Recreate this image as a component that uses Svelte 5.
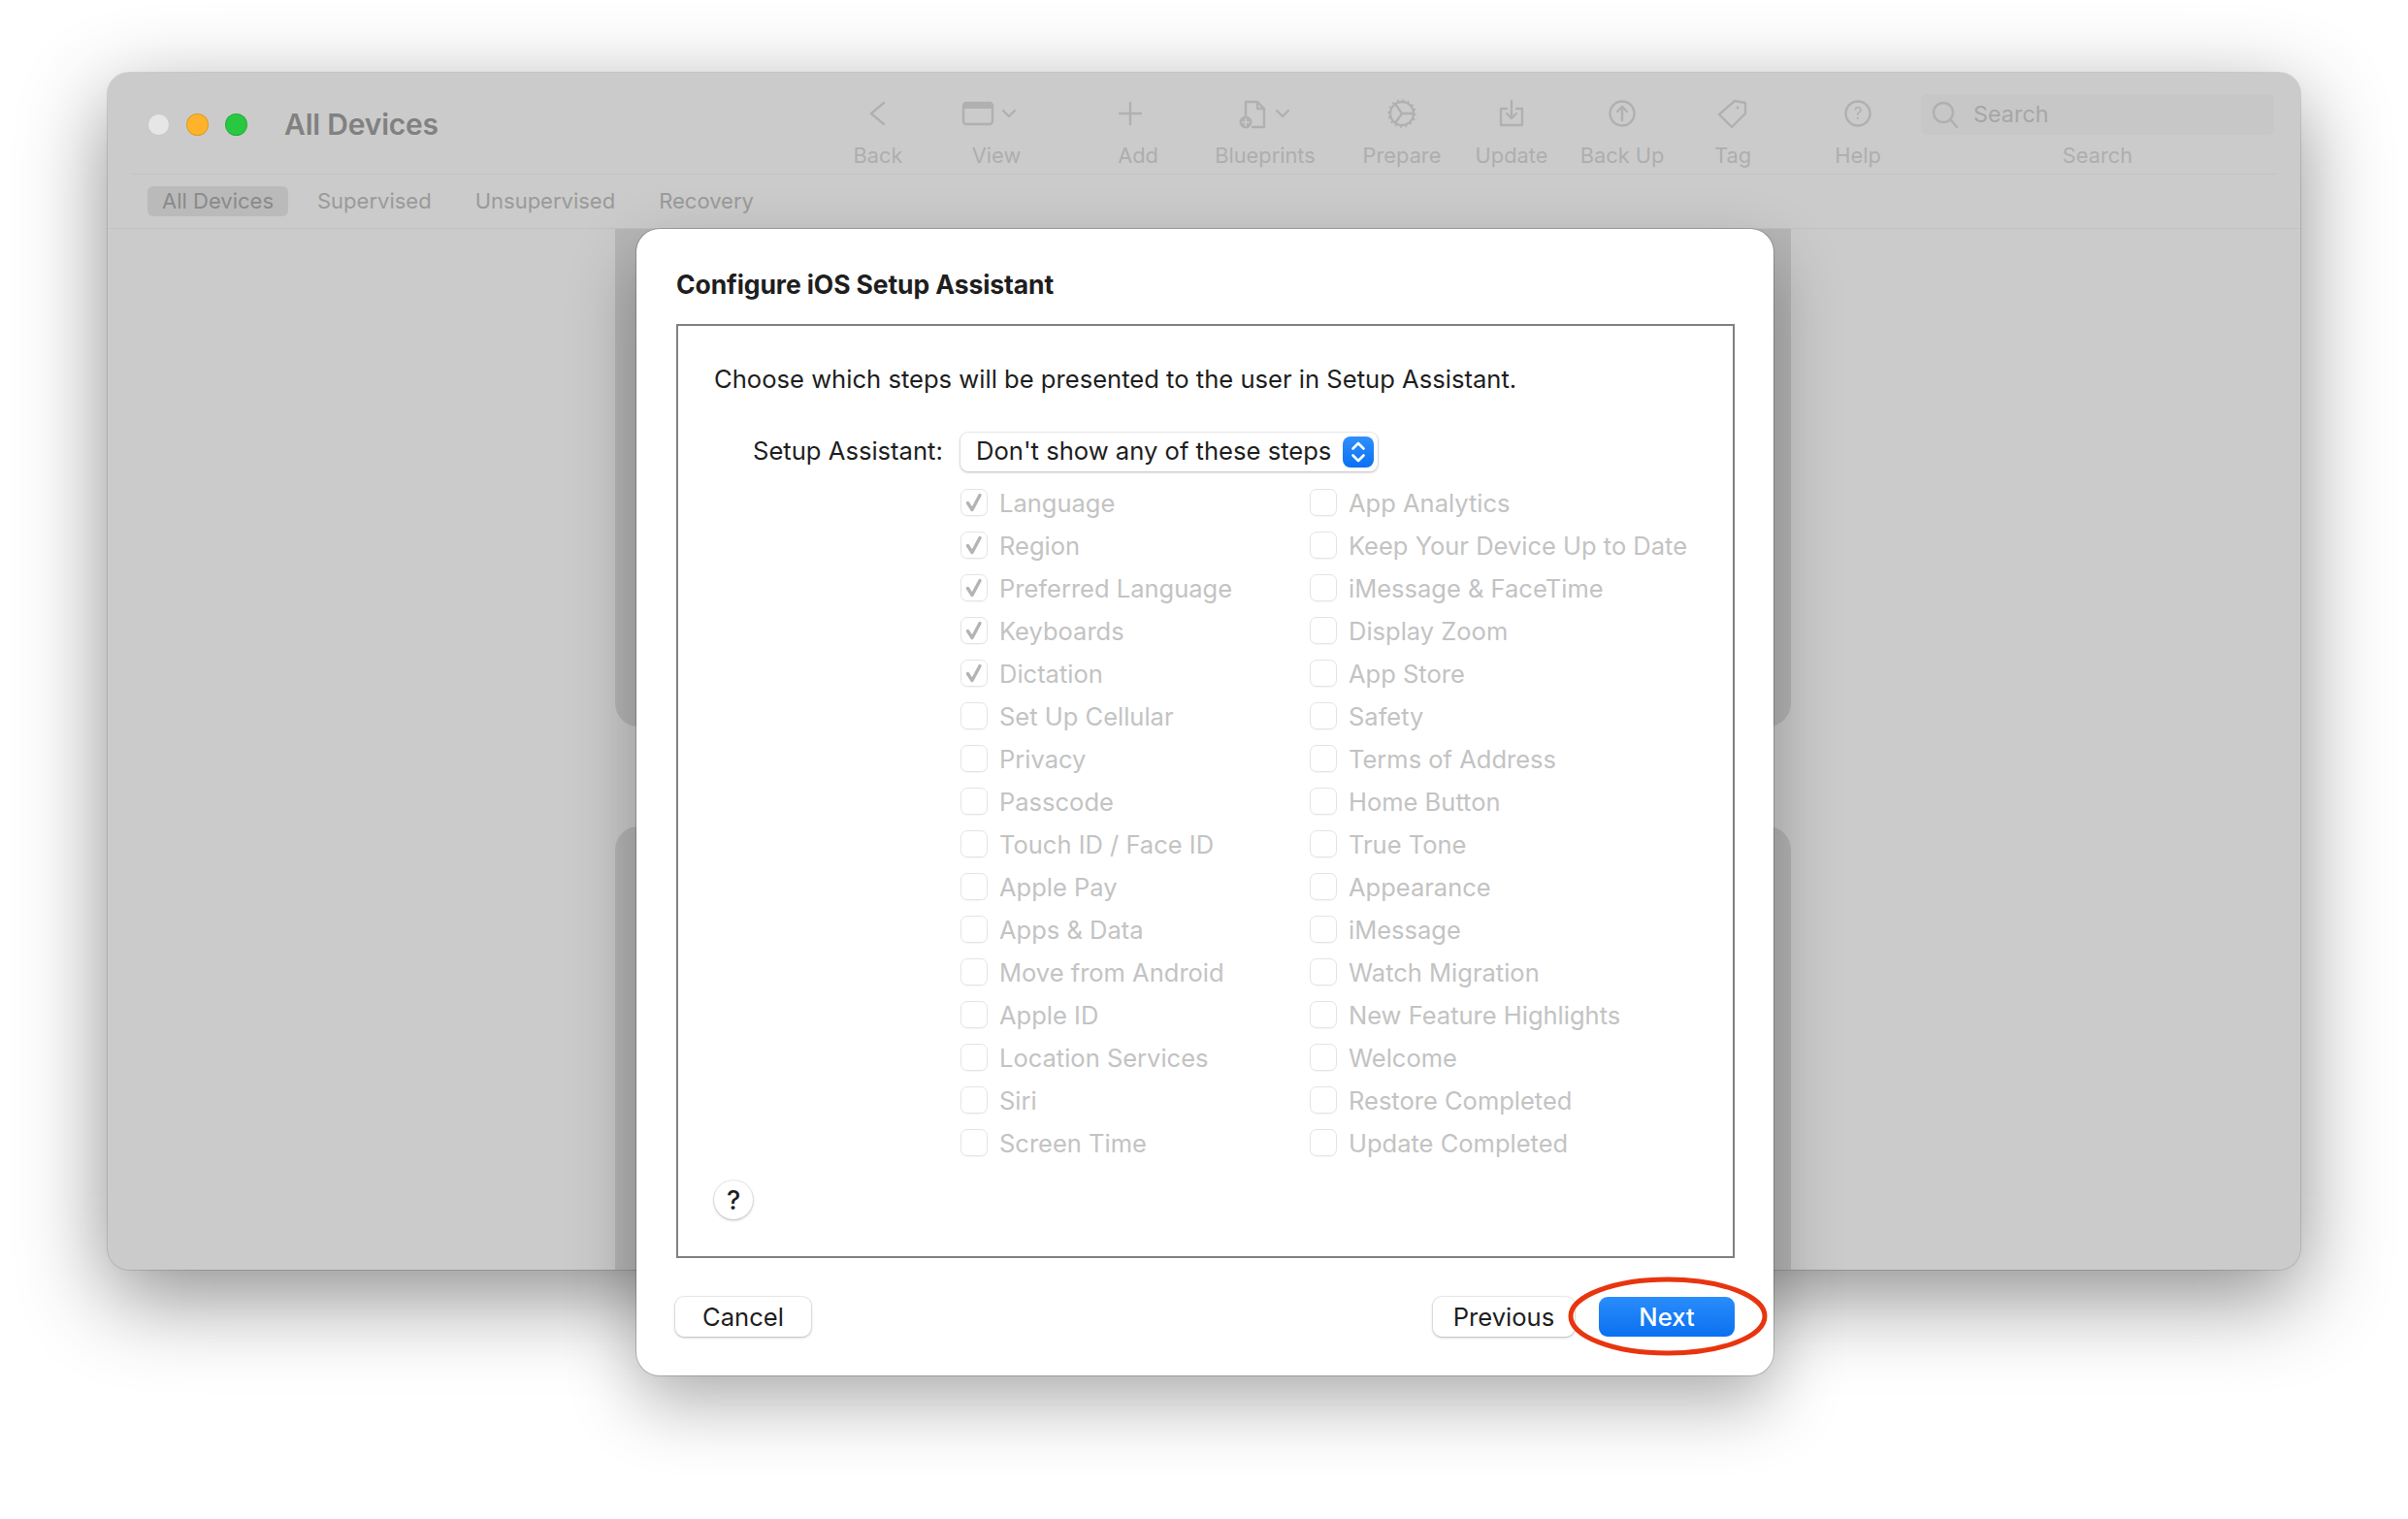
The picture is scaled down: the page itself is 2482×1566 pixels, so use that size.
<script lang="ts">
  const leftSteps = [
    'Language', 'Region', 'Preferred Language', 'Keyboards', 'Dictation', 'Set Up Cellular',
    'Privacy', 'Passcode', 'Touch ID / Face ID', 'Apple Pay', 'Apps & Data', 'Move from Android',
    'Apple ID', 'Location Services', 'Siri', 'Screen Time'
  ];
  const rightSteps = [
    'App Analytics', 'Keep Your Device Up to Date', 'iMessage & FaceTime', 'Display Zoom', 'App Store',
    'Safety', 'Terms of Address', 'Home Button', 'True Tone', 'Appearance', 'iMessage', 'Watch Migration',
    'New Feature Highlights', 'Welcome', 'Restore Completed', 'Update Completed'
  ];
  // rows run across, so zip the two columns; the first five on the left are ticked
  const steps = leftSteps.flatMap((name, i) => [
    { name, checked: i < 5 },
    { name: rightSteps[i], checked: false }
  ]);
  const tabs = ['All Devices', 'Supervised', 'Unsupervised', 'Recovery'];
</script>

<div class="stage">
  <div class="window">
    <div class="window-clip">
      <header class="titlebar">
        <div class="lights">
          <span class="light close"></span>
          <span class="light min"></span>
          <span class="light max"></span>
        </div>
        <h1 class="window-title">All Devices</h1>
        <div class="toolbar">
          <div class="tool">
            <svg width="60" height="34" viewBox="0 0 60 34"><path d="M36 6 23 17l13 11"/></svg>
            <span>Back</span>
          </div>
          <div class="tool">
            <svg class="shift-view" width="60" height="34" viewBox="0 0 60 34">
              <rect x="3" y="6" width="30" height="22" rx="3"/>
              <path class="band" d="M4 7h28v5H4z"/>
              <path d="M44 14l6 6 6-6"/>
            </svg>
            <span>View</span>
          </div>
          <div class="tool">
            <svg class="shift-add" width="60" height="34" viewBox="0 0 60 34"><path d="M30 6v22M19 17h22"/></svg>
            <span>Add</span>
          </div>
          <div class="tool">
            <svg width="60" height="34" viewBox="0 0 60 34">
              <path d="M10 19V5h12l7 7v19h-12M22 5v7h7"/>
              <circle class="solid" cx="10" cy="26" r="6.5"/>
              <path class="cut" d="M10 22.5v7M6.5 26h7"/>
              <path d="M42 14l6 6 6-6"/>
            </svg>
            <span>Blueprints</span>
          </div>
          <div class="tool">
            <svg width="60" height="34" viewBox="0 0 60 34">
              <circle cx="30" cy="17" r="12"/>
              <circle class="teeth" cx="30" cy="17" r="13.5"/>
              <path d="M23 7l7 10-7 10M30 17h12"/>
            </svg>
            <span>Prepare</span>
          </div>
          <div class="tool">
            <svg width="60" height="34" viewBox="0 0 60 34">
              <path d="M25 12h-6v17h22V12h-6M30 4v18M25 17l5 5 5-5"/>
            </svg>
            <span>Update</span>
          </div>
          <div class="tool">
            <svg width="60" height="34" viewBox="0 0 60 34">
              <circle cx="30" cy="17" r="12.5"/>
              <path d="M30 24V10M25 15l5-5 5 5"/>
            </svg>
            <span>Back Up</span>
          </div>
          <div class="tool">
            <svg width="60" height="34" viewBox="0 0 60 34">
              <path d="M16 18 32 4l11 2v11L29 31z"/>
              <circle class="solid" cx="35" cy="11" r="1.4"/>
            </svg>
            <span>Tag</span>
          </div>
          <div class="tool">
            <svg width="60" height="34" viewBox="0 0 60 34">
              <circle cx="30" cy="17" r="12.5"/>
              <text x="30" y="23" text-anchor="middle">?</text>
            </svg>
            <span>Help</span>
          </div>
          <div class="search-tool">
            <div class="search-field">
              <svg width="28" height="30" viewBox="0 0 28 30"><circle cx="12" cy="13" r="10"/><path d="M19.5 20.5 26 28"/></svg>
              <span>Search</span>
            </div>
            <span class="search-label">Search</span>
          </div>
        </div>
      </header>
      <nav class="tabs">
        {#each tabs as tab, i}
          <span class="tab" class:active={i === 0}>{tab}</span>
        {/each}
      </nav>
    </div>
  </div>

  <div class="back-sheet upper"></div>
  <div class="back-sheet lower"></div>

  <section class="dialog">
    <h2>Configure iOS Setup Assistant</h2>
    <div class="box">
      <p class="intro">Choose which steps will be presented to the user in Setup Assistant.</p>
      <div class="select-row">
        <span class="select-label">Setup Assistant:</span>
        <div class="select">
          <span class="select-value">Don't show any of these steps</span>
          <span class="stepper">
            <svg width="32" height="32" viewBox="0 0 32 32"><path d="M10.5 12.5 16 7l5.500 5.500M10.500 19.500 16 25l5.500-5.500"/></svg>
          </span>
        </div>
      </div>
      <div class="steps">
        {#each steps as step}
          <label class="step">
            <span class="check">
              {#if step.checked}
                <svg width="28" height="28" viewBox="0 0 28 28"><path d="M7.500 14.500 12 21.500 20 6.500"/></svg>
              {/if}
            </span>
            {step.name}
          </label>
        {/each}
      </div>
      <button class="help">?</button>
    </div>
    <footer class="actions">
      <button class="btn cancel">Cancel</button>
      <button class="btn previous">Previous</button>
      <button class="btn next">Next</button>
      <svg class="circle-mark" width="210" height="86" viewBox="0 0 210 86"><ellipse cx="105" cy="43" rx="100" ry="38"/></svg>
    </footer>
  </section>
</div>

<style>
  :global(body) {
    margin: 0;
    background: #fff;
  }

  .stage {
    position: relative;
    width: 2482px;
    height: 1566px;
    box-sizing: border-box;
    padding: 75px 111px 0;
    overflow: hidden;
    font-family: Inter, "Liberation Sans", sans-serif;
  }

  .window {
    height: 1234px;
    border-radius: 22px;
    background: #cbcbcb;
    box-shadow: 0 0 0 1px rgba(0, 0, 0, 0.12), 0 28px 90px rgba(0, 0, 0, 0.45);
  }

  .window-clip {
    height: 100%;
    border-radius: 22px;
    overflow: hidden;
  }

  .titlebar {
    display: flex;
    align-items: flex-start;
    height: 105px;
    box-sizing: border-box;
    margin: 0 24px;
    padding-left: 17px;
    border-bottom: 1px solid #c4c4c4;
  }

  .lights {
    display: flex;
    gap: 17px;
    margin-top: 42px;
  }

  .light {
    width: 23px;
    height: 23px;
    border-radius: 50%;
    box-sizing: border-box;
    border: 1px solid rgba(0, 0, 0, 0.12);
  }

  .light.close { background: #e6e6e6; }
  .light.min { background: #feb32b; }
  .light.max { background: #28c940; }

  .window-title {
    margin: 34px 0 0 38px;
    font-size: 30px;
    line-height: 38px;
    font-weight: 600;
    color: #818181;
    letter-spacing: -0.2px;
  }

  /* each column is the distance between two tool centres: a tool has no width of
     its own and its icon and label centre on the column's left edge */
  .toolbar {
    display: grid;
    grid-template-columns: 122px 146px 131px 141px 113px 114px 114px 129px 65px 364px;
    margin-left: auto;
    margin-right: 3px;
    padding-top: 25px;
  }

  .tool {
    display: flex;
    flex-direction: column;
    align-items: center;
    width: 0;
    white-space: nowrap;
    font-size: 21.800px;
    line-height: 28px;
    color: #aeaeae;
  }

  .tool > span {
    margin-top: 12px;
  }

  .toolbar svg {
    fill: none;
    stroke: #b0b0b0;
    stroke-width: 2.4;
    stroke-linejoin: round;
    stroke-linecap: round;
    flex: none;
  }

  .tool svg text {
    fill: #b0b0b0;
    stroke: none;
    font-size: 17px;
    font-family: Inter, sans-serif;
  }

  .tool svg .solid { fill: #b0b0b0; stroke: none; }
  .tool svg .band { fill: #b0b0b0; stroke: none; }
  .tool svg .cut { stroke: #cbcbcb; stroke-width: 1.6; }
  .tool svg .teeth { stroke-dasharray: 1.800 3.500; stroke-width: 2.600; stroke-linecap: butt; }

  .shift-view { margin-right: 14px; }
  .shift-add { margin-right: 16px; }

  .search-tool {
    display: flex;
    flex-direction: column;
    align-items: center;
    margin-top: -3px;
    font-size: 21.800px;
    line-height: 28px;
    color: #aeaeae;
  }

  .search-label {
    margin-top: 7px;
  }

  .search-field {
    align-self: stretch;
    display: flex;
    align-items: center;
    gap: 15px;
    height: 42px;
    padding-left: 11px;
    box-sizing: border-box;
    border-radius: 6px;
    background: #c7c7c7;
    color: #a6a6a6;
    font-size: 23.400px;
  }

  .tabs {
    display: flex;
    gap: 15px;
    height: 56px;
    margin: 0;
    padding: 12px 0 0 41px;
    box-sizing: border-box;
    border-bottom: 1px solid #c2c2c2;
  }

  .tab {
    height: 31px;
    padding: 0 15px;
    border-radius: 6px;
    font-size: 22px;
    line-height: 31px;
    color: #9a9a9a;
  }

  .tab.active {
    background: #bababa;
    color: #8a8a8a;
  }

  /* sheets stacked behind the dialog, only their side edges show */
  .back-sheet {
    position: absolute;
    left: 634px;
    width: 1212px;
    background: #b6b6b6;
  }

  .back-sheet.upper {
    top: 236px;
    height: 513px;
    border-radius: 0 0 24px 24px;
  }

  .back-sheet.lower {
    top: 852px;
    height: 457px;
    border-radius: 24px 24px 0 0;
  }

  .dialog {
    position: absolute;
    left: 656px;
    top: 236px;
    width: 1172px;
    height: 1182px;
    box-sizing: border-box;
    padding: 40px 40px 0 41px;
    border-radius: 24px;
    background: #fff;
    box-shadow: 0 0 0 1px rgba(0, 0, 0, 0.18), 0 30px 70px rgba(0, 0, 0, 0.3);
  }

  h2 {
    margin: 0 0 24px;
    font-size: 26.500px;
    line-height: 34px;
    font-weight: 700;
    color: #1e1e1e;
    letter-spacing: -0.1px;
  }

  .box {
    height: 963px;
    box-sizing: border-box;
    padding: 38px 37px 0;
    border: 2px solid #808080;
  }

  .intro {
    margin: 0 0 38px;
    font-size: 25.600px;
    line-height: 34px;
    color: #1e1e1e;
  }

  .select-row {
    display: grid;
    grid-template-columns: 254px auto;
    justify-content: start;
    align-items: center;
    height: 40px;
    font-size: 25.600px;
    color: #1e1e1e;
  }

  .select-label {
    padding: 0 0 3px 40px;
  }

  .select-value {
    padding-bottom: 3px;
  }

  .select {
    display: flex;
    align-items: center;
    justify-content: space-between;
    width: 430px;
    height: 40px;
    box-sizing: border-box;
    padding: 0 4px 0 16px;
    border-radius: 8px;
    background: #fff;
    box-shadow: 0 0 0 1px rgba(0, 0, 0, 0.07), 0 1px 3px rgba(0, 0, 0, 0.22);
  }

  .stepper {
    display: flex;
    width: 32px;
    height: 32px;
    border-radius: 8px;
    background: linear-gradient(#2f90fb, #0a70f3);
  }

  .stepper svg {
    fill: none;
    stroke: #fff;
    stroke-width: 2.600;
    stroke-linecap: round;
    stroke-linejoin: round;
  }

  .steps {
    display: grid;
    grid-template-columns: 360px auto;
    grid-auto-rows: 44px;
    justify-content: start;
    margin: 10px 0 0 254px;
  }

  .step {
    display: flex;
    align-items: center;
    gap: 12px;
    font-size: 25.500px;
    color: #c3c3c3;
  }

  .check {
    display: block;
    width: 28px;
    height: 28px;
    box-sizing: border-box;
    border: 1px solid #e4e4e4;
    border-radius: 7px;
    box-shadow: 0 1px 1px rgba(0, 0, 0, 0.04);
  }

  .check svg {
    display: block;
    margin: -1px;
    fill: none;
    stroke: #b4b4b4;
    stroke-width: 3.400;
    stroke-linecap: round;
    stroke-linejoin: round;
  }

  .help {
    display: block;
    width: 40px;
    height: 40px;
    margin-top: 17px;
    padding: 0;
    border: none;
    border-radius: 50%;
    background: #fff;
    box-shadow: 0 0 0 1px rgba(0, 0, 0, 0.06), 0 1px 3px rgba(0, 0, 0, 0.25);
    font-family: inherit;
    font-size: 27px;
    font-weight: 500;
    color: #1e1e1e;
  }

  .actions {
    position: relative;
    display: flex;
    margin: 40px 0 0 -1px;
  }

  .btn {
    height: 41px;
    padding: 0;
    border: none;
    border-radius: 9px;
    background: #fff;
    box-shadow: 0 0 0 1px rgba(0, 0, 0, 0.06), 0 1px 3px rgba(0, 0, 0, 0.25);
    font-family: inherit;
    font-size: 25.600px;
    color: #1e1e1e;
  }

  .cancel {
    width: 140px;
    margin-right: auto;
  }

  .previous {
    width: 146px;
    margin-right: 25px;
  }

  .next {
    width: 140px;
    background: linear-gradient(#2a8dfb, #0a70f0);
    box-shadow: none;
    color: #fff;
    font-weight: 500;
  }

  .circle-mark {
    position: absolute;
    right: -36px;
    top: -23px;
    fill: none;
    stroke: #e8350f;
    stroke-width: 5;
  }
</style>
